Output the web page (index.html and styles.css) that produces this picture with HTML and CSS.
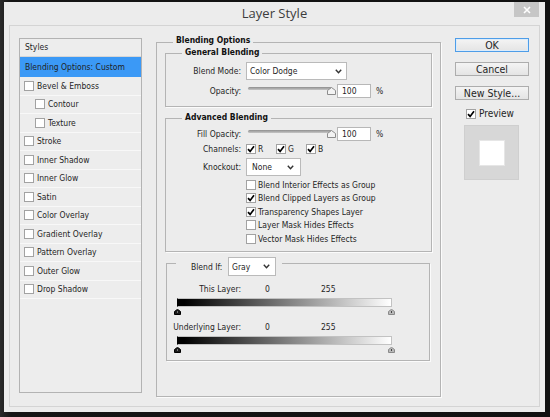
FILE: index.html
```html
<!DOCTYPE html>
<html lang="en">
<head>
  <meta charset="UTF-8">
  <title>Layer Style</title>
  <link rel="stylesheet" href="styles.css">
</head>
<body>
  <div class="window">
    <div class="titlebar">
      <span></span>
      <h1>Layer Style</h1>
      <button class="close">
        <svg width="8" height="8" viewBox="0 0 8 8"><path d="M1 1 L7 7 M7 1 L1 7" stroke="#fff" stroke-width="1.6"/></svg>
      </button>
    </div>

    <div class="frame">
      <!-- lista de estilos -->
      <div class="styles-list">
        <div class="list-head">Styles</div>
        <div class="list-item active">Blending Options: Custom</div>
        <div class="list-item"><span class="box"></span>Bevel &amp; Emboss</div>
        <div class="list-item sub"><span class="box"></span>Contour</div>
        <div class="list-item sub"><span class="box"></span>Texture</div>
        <div class="list-item"><span class="box"></span>Stroke</div>
        <div class="list-item"><span class="box"></span>Inner Shadow</div>
        <div class="list-item"><span class="box"></span>Inner Glow</div>
        <div class="list-item"><span class="box"></span>Satin</div>
        <div class="list-item"><span class="box"></span>Color Overlay</div>
        <div class="list-item"><span class="box"></span>Gradient Overlay</div>
        <div class="list-item"><span class="box"></span>Pattern Overlay</div>
        <div class="list-item"><span class="box"></span>Outer Glow</div>
        <div class="list-item"><span class="box"></span>Drop Shadow</div>
      </div>

      <!-- opções de mesclagem -->
      <div class="group outer">
        <div class="group-title">Blending Options</div>

        <div class="group general">
          <div class="group-title">General Blending</div>
          <div class="row tall">
            <span class="label">Blend Mode:</span>
            <div class="select mode">Color Dodge
              <svg width="7" height="5" viewBox="0 0 7 5"><path d="M0.8 0.8 L3.5 3.8 L6.2 0.8" stroke="#333" stroke-width="1.4" fill="none"/></svg>
            </div>
          </div>
          <div class="row gap4">
            <span class="label">Opacity:</span>
            <div class="slider">
              <div class="track"></div>
              <svg class="thumb" width="9" height="8" viewBox="0 0 9 8"><path d="M0.5 7.5 L0.5 3.5 L4.5 0.5 L8.5 3.5 L8.5 7.5 Z" fill="#f3f3f3" stroke="#8c8c8c"/></svg>
            </div>
            <div class="num">100</div>
            <span class="pct">%</span>
          </div>
        </div>

        <div class="group advanced">
          <div class="group-title">Advanced Blending</div>
          <div class="row fill">
            <span class="label">Fill Opacity:</span>
            <div class="slider">
              <div class="track"></div>
              <svg class="thumb" width="9" height="8" viewBox="0 0 9 8"><path d="M0.5 7.5 L0.5 3.5 L4.5 0.5 L8.5 3.5 L8.5 7.5 Z" fill="#f3f3f3" stroke="#8c8c8c"/></svg>
            </div>
            <div class="num">100</div>
            <span class="pct">%</span>
          </div>
          <div class="row channels">
            <span class="label">Channels:</span>
            <div class="channel"><span class="box tick"><svg width="8" height="8" viewBox="0 0 8 8"><path d="M1 4.2 L3.1 6.4 L7 1.3" stroke="#000" stroke-width="1.7" fill="none"/></svg></span>R</div>
            <div class="channel"><span class="box tick"><svg width="8" height="8" viewBox="0 0 8 8"><path d="M1 4.2 L3.1 6.4 L7 1.3" stroke="#000" stroke-width="1.7" fill="none"/></svg></span>G</div>
            <div class="channel"><span class="box tick"><svg width="8" height="8" viewBox="0 0 8 8"><path d="M1 4.2 L3.1 6.4 L7 1.3" stroke="#000" stroke-width="1.7" fill="none"/></svg></span>B</div>
          </div>
          <div class="row knock">
            <span class="label">Knockout:</span>
            <div class="select none">None
              <svg width="7" height="5" viewBox="0 0 7 5"><path d="M0.8 0.8 L3.5 3.8 L6.2 0.8" stroke="#333" stroke-width="1.4" fill="none"/></svg>
            </div>
          </div>
          <div class="checks">
            <div class="check"><span class="box"></span>Blend Interior Effects as Group</div>
            <div class="check"><span class="box tick"><svg width="8" height="8" viewBox="0 0 8 8"><path d="M1 4.2 L3.1 6.4 L7 1.3" stroke="#000" stroke-width="1.7" fill="none"/></svg></span>Blend Clipped Layers as Group</div>
            <div class="check"><span class="box tick"><svg width="8" height="8" viewBox="0 0 8 8"><path d="M1 4.2 L3.1 6.4 L7 1.3" stroke="#000" stroke-width="1.7" fill="none"/></svg></span>Transparency Shapes Layer</div>
            <div class="check"><span class="box"></span>Layer Mask Hides Effects</div>
            <div class="check"><span class="box"></span>Vector Mask Hides Effects</div>
          </div>
        </div>

        <div class="group blendif">
          <div class="legend">
            <span class="legend-label">Blend If:</span>
            <div class="select gray">Gray
              <svg width="7" height="5" viewBox="0 0 7 5"><path d="M0.8 0.8 L3.5 3.8 L6.2 0.8" stroke="#333" stroke-width="1.4" fill="none"/></svg>
            </div>
          </div>

          <div class="layer-row first">
            <span class="label">This Layer:</span>
            <span class="val">0</span>
            <span>255</span>
          </div>
          <div class="bar"></div>
          <div class="handles">
            <svg width="7" height="6" viewBox="0 0 7 6"><path d="M0.5 5.5 L0.5 2.5 L3.5 0.3 L6.5 2.5 L6.5 5.5 Z" fill="#1a1a1a" stroke="#000"/><path d="M3.5 2 L3.5 4" stroke="#777" stroke-width="1"/></svg>
            <svg width="7" height="6" viewBox="0 0 7 6"><path d="M0.5 5.5 L0.5 2.5 L3.5 0.3 L6.5 2.5 L6.5 5.5 Z" fill="#b9b9b9" stroke="#8a8a8a"/><path d="M3.5 2 L3.5 4" stroke="#444" stroke-width="1"/></svg>
          </div>

          <div class="layer-row">
            <span class="label">Underlying Layer:</span>
            <span class="val">0</span>
            <span>255</span>
          </div>
          <div class="bar"></div>
          <div class="handles">
            <svg width="7" height="6" viewBox="0 0 7 6"><path d="M0.5 5.5 L0.5 2.5 L3.5 0.3 L6.5 2.5 L6.5 5.5 Z" fill="#1a1a1a" stroke="#000"/><path d="M3.5 2 L3.5 4" stroke="#777" stroke-width="1"/></svg>
            <svg width="7" height="6" viewBox="0 0 7 6"><path d="M0.5 5.5 L0.5 2.5 L3.5 0.3 L6.5 2.5 L6.5 5.5 Z" fill="#b9b9b9" stroke="#8a8a8a"/><path d="M3.5 2 L3.5 4" stroke="#444" stroke-width="1"/></svg>
          </div>
        </div>
      </div>

      <!-- botões -->
      <div class="side">
        <button class="btn ok">OK</button>
        <button class="btn">Cancel</button>
        <button class="btn">New Style...</button>
        <div class="preview-check">
          <span class="box tick"><svg width="8" height="8" viewBox="0 0 8 8"><path d="M1 4.2 L3.1 6.4 L7 1.3" stroke="#000" stroke-width="1.7" fill="none"/></svg></span>Preview
        </div>
        <div class="swatch"><div class="swatch-inner"></div></div>
      </div>
    </div>
  </div>
</body>
</html>
```

FILE: styles.css
```css
body {
  margin: 0;
  height: 417px;
  overflow: hidden;
  background: linear-gradient(90deg, #2a2a2a, #151515 2%, #111);
  font-family: "DejaVu Sans Condensed", "Liberation Sans", sans-serif;
  font-size: 8.5px;
  color: #1f1f1f;
}

.window {
  margin: 2px 0 0 4px;
  width: 541px;
  height: 410px;
  background: #ececec;
  display: flex;
  flex-direction: column;
}

.titlebar {
  height: 23px;
  display: grid;
  grid-template-columns: 1fr auto 1fr;
}

.titlebar h1 {
  margin: 0;
  font: 400 13px/23px "Open Sans", sans-serif;
  color: #3c3c3c;
}

.close {
  justify-self: end;
  align-self: start;
  width: 25px;
  height: 15px;
  margin-right: 6px;
  padding: 0;
  border: none;
  background: #c6c6c6;
  display: flex;
  align-items: center;
  justify-content: center;
}

.frame {
  margin: 0 5px;
  height: 382px;
  box-sizing: border-box;
  border: 1px solid #d4d4d4;
  padding: 12px 0 0 9px;
  display: flex;
  align-items: flex-start;
}

/* Lista de estilos */
.styles-list {
  flex: none;
  width: 123px;
  height: 355px;
  box-sizing: border-box;
  border: 1px solid #b3b3b3;
  background: #ededed;
}

.list-head {
  height: 18px;
  box-sizing: border-box;
  line-height: 17px;
  padding-left: 5px;
  border-bottom: 1px solid #d6d6d6;
}

.list-item {
  height: 18.5px;
  box-sizing: border-box;
  display: flex;
  align-items: center;
  padding-left: 4px;
  border-bottom: 1px solid #f8f8f8;
}

.list-item.active {
  height: 20px;
  padding-left: 5px;
  background: #3b99f6;
  border-bottom: none;
}

.list-item.sub {
  padding-left: 15px;
}

.box {
  flex: none;
  width: 10px;
  height: 10px;
  box-sizing: border-box;
  border: 1px solid #a2a2a2;
  background: #fff;
  margin-right: 3px;
  display: flex;
  align-items: center;
  justify-content: center;
}

/* Grupos */
.group {
  box-sizing: border-box;
  border: 1px solid #b4b4b4;
  box-shadow: 1px 1px 0 #fbfbfb;
}

.group-title {
  width: fit-content;
  height: 10px;
  line-height: 10px;
  padding: 0 3px;
  background: #ececec;
  font-weight: bold;
  color: #111;
}

.outer {
  flex: none;
  width: 285px;
  height: 355px;
  margin: 4px 0 0 14px;
}

.outer > .group-title {
  margin: -8px 0 0 16px;
}

.general,
.advanced {
  width: 267px;
  margin: 8px 0 0 8px;
}

.general {
  height: 54px;
}

.advanced {
  height: 134px;
  margin-top: 11px;
}

.general > .group-title,
.advanced > .group-title {
  margin: -7px 0 0 16px;
}

.row {
  display: flex;
  align-items: center;
  height: 14px;
}

.row .label {
  width: 75px;
  margin-right: 5px;
  text-align: right;
  flex: none;
}

.row.tall {
  height: 18px;
  margin-top: 5px;
}

.row.gap4 {
  margin-top: 4px;
}

.row.fill {
  margin-top: 5px;
}

.row.channels {
  margin-top: 1px;
}

.row.knock {
  height: 18px;
  margin-top: 2px;
}

.select {
  box-sizing: border-box;
  display: flex;
  align-items: center;
  justify-content: space-between;
  border: 1px solid #bababa;
  background: #fff;
  padding: 0 4px 0 3px;
}

.select.mode {
  width: 101px;
  height: 18px;
}

.select.none {
  width: 55px;
  height: 18px;
  padding: 0 6px 0 5px;
}

.select.gray {
  width: 48px;
  height: 19px;
  padding: 0 5px 0 3px;
}

.slider {
  position: relative;
  width: 86px;
  height: 14px;
  margin-left: 2px;
}

.track {
  margin-top: 3px;
  width: 84px;
  height: 3px;
  border-radius: 2px;
  background: linear-gradient(#8e8e8e, #c6c6c6);
}

.thumb {
  position: absolute;
  left: 79px;
  top: 3px;
}

.num {
  box-sizing: border-box;
  width: 34px;
  height: 14px;
  margin-left: 3px;
  padding-left: 4px;
  line-height: 12px;
  border: 1px solid #b7b7b7;
  background: #fff;
}

.pct {
  margin-left: 5px;
}

.channel {
  width: 30px;
  display: flex;
  align-items: center;
}

.channel .box,
.check .box {
  margin-right: 2px;
}

.checks {
  margin-top: 2px;
  padding-left: 80px;
}

.check {
  height: 13.5px;
  display: flex;
  align-items: center;
}

/* Blend If */
.blendif {
  width: 264px;
  height: 98px;
  margin: 11px 0 0 9px;
}

.legend {
  width: fit-content;
  margin: -7px 0 0 9px;
  padding: 0 6px 0 15px;
  background: #ececec;
  display: flex;
  align-items: center;
}

.legend-label {
  width: 33px;
  margin-right: 4px;
}

.layer-row {
  height: 12px;
  margin-top: 6px;
  display: flex;
  align-items: center;
}

.layer-row.first {
  margin-top: 7px;
}

.layer-row .label {
  width: 74px;
  text-align: right;
}

.layer-row .val {
  width: 56px;
  margin-left: 24px;
}

.bar {
  width: 215px;
  height: 9px;
  margin: 3px 0 0 10px;
  box-sizing: border-box;
  border: 1px solid #c2c2c2;
  border-left-color: #000;
  background: linear-gradient(90deg, #000, #000 3%, #fff);
}

.handles {
  width: 221px;
  height: 6px;
  margin: 2px 0 0 7px;
  display: flex;
  justify-content: space-between;
}

.handles svg {
  display: block;
}

/* Coluna da direita */
.side {
  flex: none;
  width: 74px;
  margin-left: 14px;
  display: flex;
  flex-direction: column;
  align-items: flex-start;
}

.btn {
  width: 74px;
  height: 14px;
  margin: 0 0 10px;
  padding: 0;
  box-sizing: border-box;
  border: 1px solid #adadad;
  background: linear-gradient(#f4f4f4, #e4e4e4);
  font-family: "DejaVu Sans Condensed", "Liberation Sans", sans-serif;
  font-size: 10.5px;
  line-height: 12px;
  color: #1f1f1f;
}

.btn.ok {
  border-color: #4e9de8;
  box-shadow: inset 0 0 0 1px #dcecfb;
}

.preview-check {
  height: 11px;
  margin: -2px 0 0 11px;
  display: flex;
  align-items: center;
  font-size: 10px;
}

.swatch {
  width: 55px;
  height: 55px;
  margin: 6px 0 0 9px;
  box-sizing: border-box;
  border: 1px solid #cfcfcf;
  background: #d7d7d7;
  display: flex;
  align-items: center;
  justify-content: center;
}

.swatch-inner {
  width: 26px;
  height: 26px;
  box-sizing: border-box;
  border: 1px solid #e6e6e6;
  background: #fff;
}
```
